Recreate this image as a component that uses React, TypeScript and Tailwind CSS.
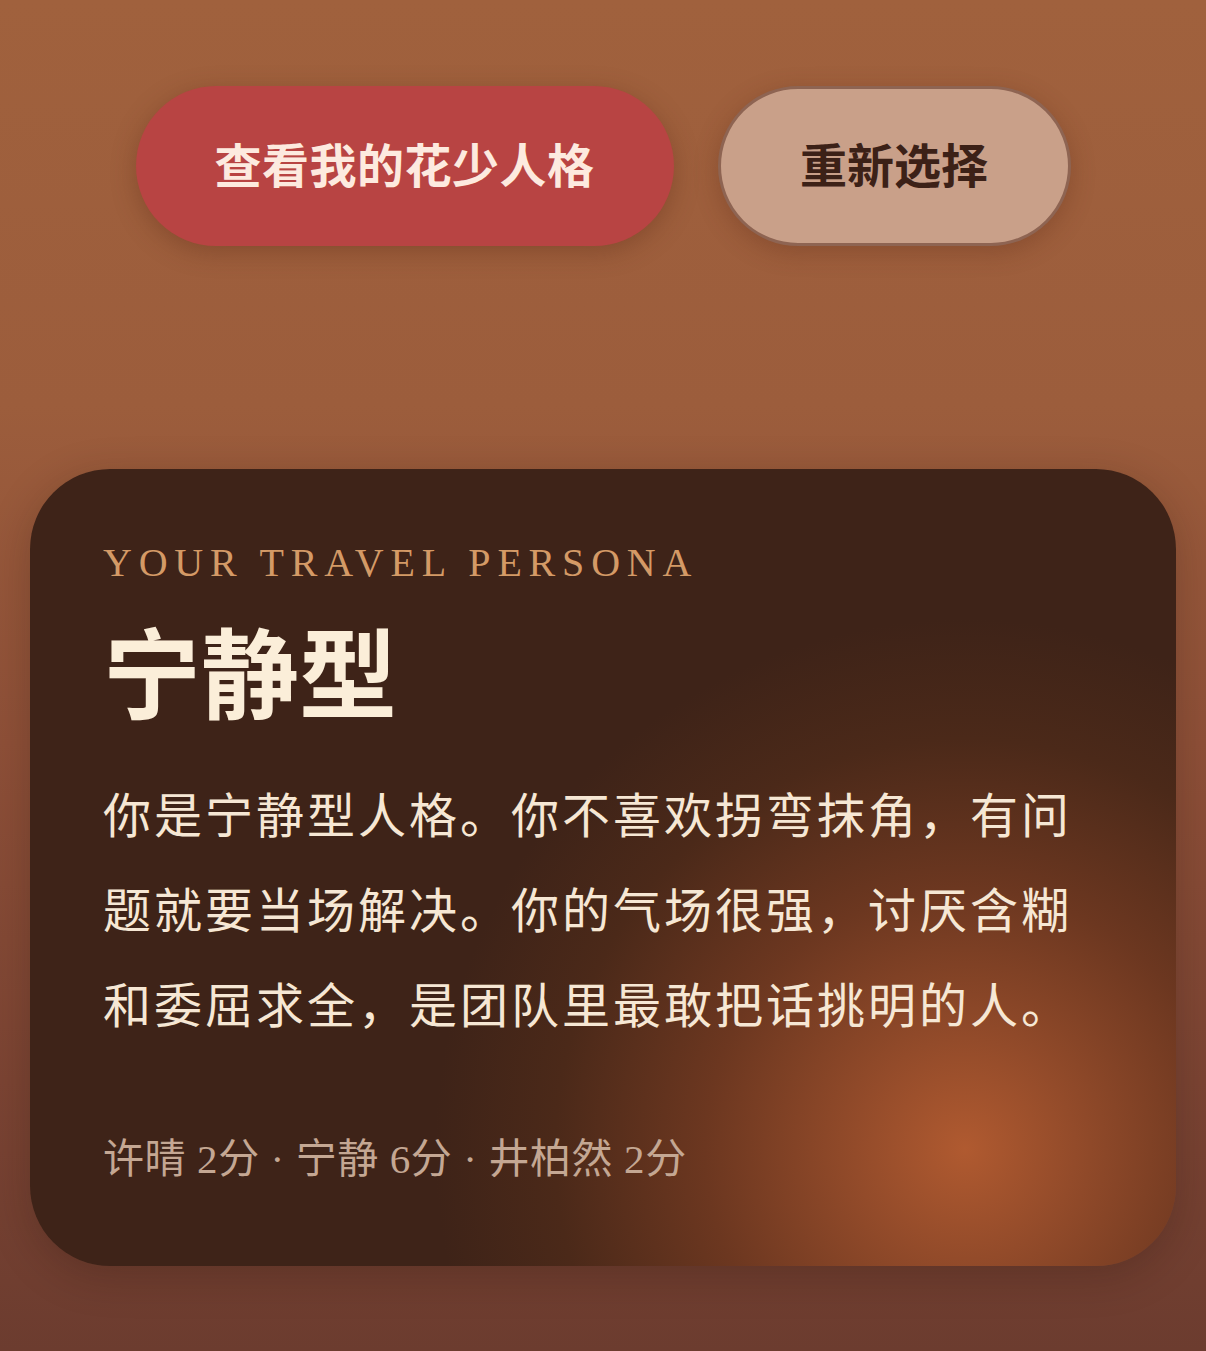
import React from "react";

export default function App() {
  return (
    <div
      className="w-[1206px] h-[1351px] overflow-hidden"
      style={{
        background:
          "linear-gradient(180deg, #a0613d 0%, #9c5d3c 30%, #8e5038 55%, #7b4433 80%, #6c3c2f 100%)",
        fontFamily: '"Noto Sans CJK SC", "Noto Sans", sans-serif',
      }}
    >
      <div className="flex justify-center gap-[44px] pt-[86px]">
        <div className="w-[538px] h-[160px] rounded-full bg-[#b84443] flex items-center justify-center pb-[8px] shadow-[0_6px_24px_rgba(90,40,20,0.35)]">
          <span className="text-[47px] font-bold text-[#fdeadf] leading-none tracking-[0.5px]">查看我的花少人格</span>
        </div>
        <div className="w-[353px] h-[160px] rounded-full bg-[#c9a089] border-[3px] border-[#8e6452] flex items-center justify-center pb-[8px] shadow-[0_6px_24px_rgba(90,40,20,0.3)]">
          <span className="text-[47px] font-bold text-[#3c2117] leading-none">重新选择</span>
        </div>
      </div>

      <div
        className="mx-[30px] mt-[223px] h-[797px] rounded-[80px] overflow-hidden pl-[73px] pr-[40px] pt-[74px]"
        style={{
          background:
            "radial-gradient(circle at 935px 680px, #b05a30 0px, #934b2a 110px, #6c3720 260px, #4b2919 410px, #3e2318 530px)",
          boxShadow: "0 10px 40px rgba(40,18,10,0.25)",
        }}
      >
        <div
          className="text-[40px] leading-none tracking-[0.17em] text-[#d49a66]"
          style={{ fontFamily: '"Liberation Serif", serif' }}
        >
          YOUR TRAVEL PERSONA
        </div>
        <div className="mt-[36px] text-[98px] font-bold leading-none text-[#fbeed9]">宁静型</div>
        <p className="mt-[48px] text-[48px] leading-[95px] tracking-[3px] whitespace-nowrap text-[#f6e7d4]">
          你是宁静型人格。你不喜欢拐弯抹角，有问
          <br />
          题就要当场解决。你的气场很强，讨厌含糊
          <br />
          和委屈求全，是团队里最敢把话挑明的人。
        </p>
        <div
          className="mt-[89px] text-[41px] leading-none tracking-[0.6px] text-[#c4a793]"
          style={{ fontFamily: '"Liberation Serif", "Noto Sans CJK SC", serif' }}
        >
          许晴 2分 · 宁静 6分 · 井柏然 2分
        </div>
      </div>
    </div>
  );
}
